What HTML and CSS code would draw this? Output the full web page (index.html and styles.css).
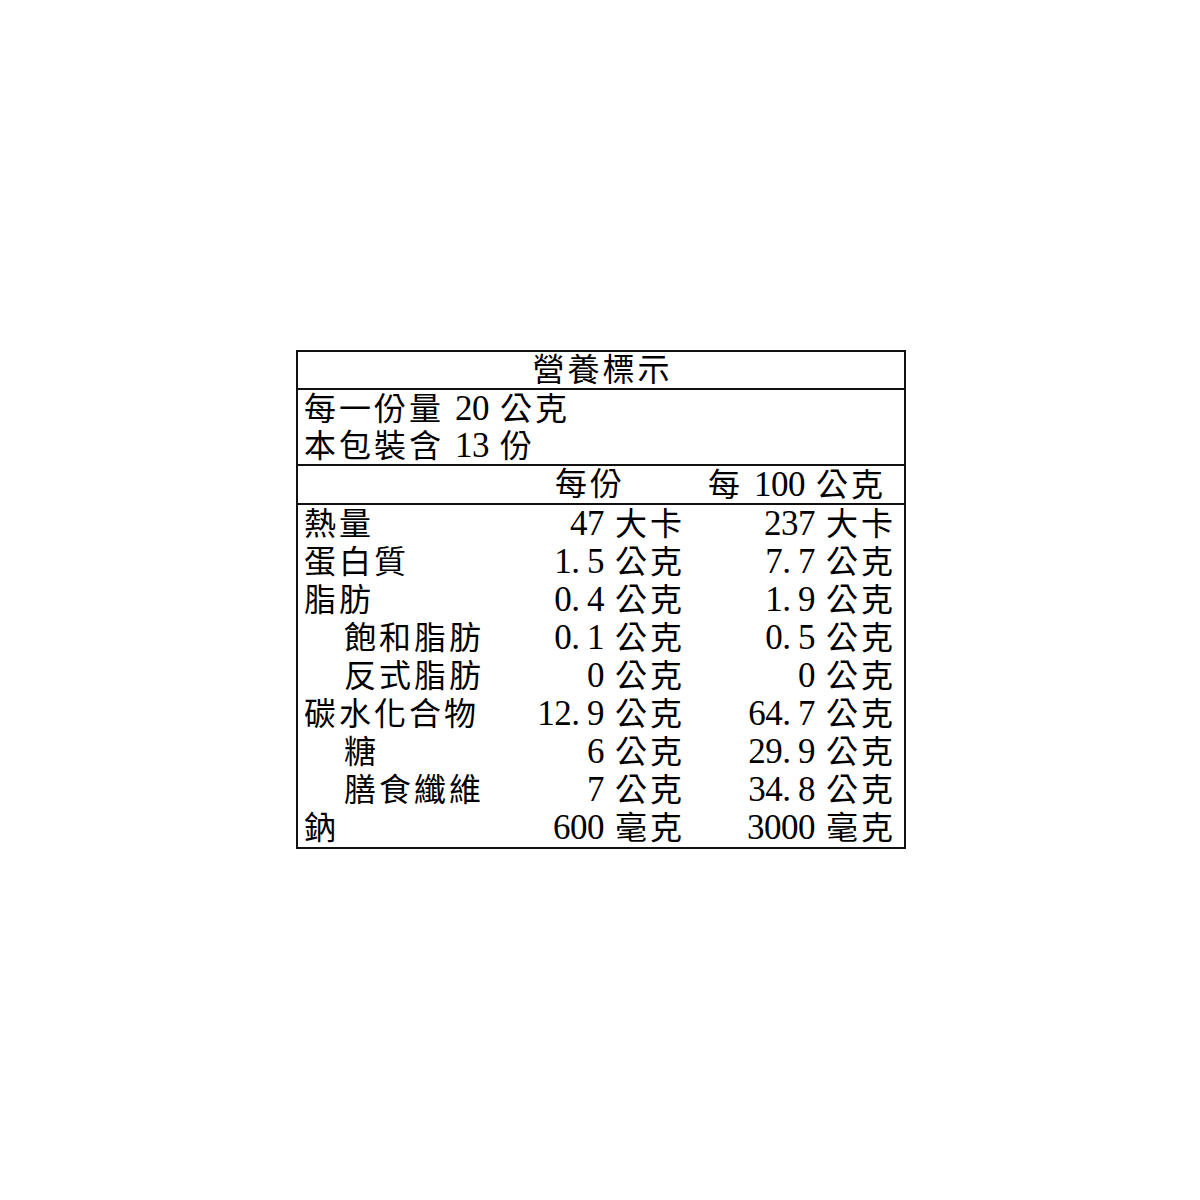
FILE: index.html
```html
<!DOCTYPE html>
<html lang="zh-Hant">
<head>
<meta charset="utf-8">
<title>營養標示</title>
<link rel="stylesheet" href="styles.css">
</head>
<body>
<div class="label">
  <div class="title">營養標示</div>
  <div class="serving">
    <div class="line">每一份量 <span class="num">20</span> 公克</div>
    <div class="line">本包裝含 <span class="num">13</span> 份</div>
  </div>
  <div class="grid head">
    <div class="name"></div>
    <div class="h1">每份</div>
    <div class="h2">每 <span class="num">100</span> 公克</div>
  </div>
  <div class="grid body">
    <div class="name">熱量</div>
    <div class="v1"><span class="num">47</span> 大卡</div>
    <div class="v2"><span class="num">237</span> 大卡</div>

    <div class="name">蛋白質</div>
    <div class="v1"><span class="num">1<span class="dot">.</span>5</span> 公克</div>
    <div class="v2"><span class="num">7<span class="dot">.</span>7</span> 公克</div>

    <div class="name">脂肪</div>
    <div class="v1"><span class="num">0<span class="dot">.</span>4</span> 公克</div>
    <div class="v2"><span class="num">1<span class="dot">.</span>9</span> 公克</div>

    <div class="name sub">飽和脂肪</div>
    <div class="v1"><span class="num">0<span class="dot">.</span>1</span> 公克</div>
    <div class="v2"><span class="num">0<span class="dot">.</span>5</span> 公克</div>

    <div class="name sub">反式脂肪</div>
    <div class="v1"><span class="num">0</span> 公克</div>
    <div class="v2"><span class="num">0</span> 公克</div>

    <div class="name">碳水化合物</div>
    <div class="v1"><span class="num">12<span class="dot">.</span>9</span> 公克</div>
    <div class="v2"><span class="num">64<span class="dot">.</span>7</span> 公克</div>

    <div class="name sub">糖</div>
    <div class="v1"><span class="num">6</span> 公克</div>
    <div class="v2"><span class="num">29<span class="dot">.</span>9</span> 公克</div>

    <div class="name sub">膳食纖維</div>
    <div class="v1"><span class="num">7</span> 公克</div>
    <div class="v2"><span class="num">34<span class="dot">.</span>8</span> 公克</div>

    <div class="name">鈉</div>
    <div class="v1"><span class="num">600</span> 毫克</div>
    <div class="v2"><span class="num">3000</span> 毫克</div>
  </div>
</div>
</body>
</html>
```

FILE: styles.css
```css
html, body {
  margin: 0;
  padding: 0;
  background: #fff;
}

body {
  padding-top: 350px;
  font-family: "Liberation Serif", "Noto Sans CJK TC", serif;
  font-size: 32px;
  font-weight: 400;
  color: #000;
}

.label {
  width: 606px;
  margin-left: 296px;
  border: 2px solid #111;
  letter-spacing: 3px;
  white-space: nowrap;
}

.num {
  font-family: "Liberation Serif", serif;
  font-size: 35px;
  letter-spacing: -0.5px;
}

.dot {
  letter-spacing: 7px;
}

.title {
  height: 36px;
  line-height: 36px;
  text-align: center;
  padding-left: 3px;
  border-bottom: 2px solid #111;
}

.serving {
  padding-left: 6px;
  border-bottom: 2px solid #111;
}

.serving .line {
  height: 37px;
  line-height: 37px;
}

.grid {
  display: grid;
  grid-template-columns: 222px 180px 1fr;
}

.head {
  height: 37px;
  line-height: 37px;
  border-bottom: 2px solid #111;
}

.body {
  grid-auto-rows: 38px;
  line-height: 38px;
}

.name {
  padding-left: 6px;
}

.name.sub {
  padding-left: 46px;
}

.h1 {
  text-align: right;
  padding-right: 75px;
}

.h2 {
  text-align: right;
  padding-right: 18px;
}

.v1 {
  text-align: right;
  padding-right: 15px;
}

.v2 {
  text-align: right;
  padding-right: 8px;
}
```
